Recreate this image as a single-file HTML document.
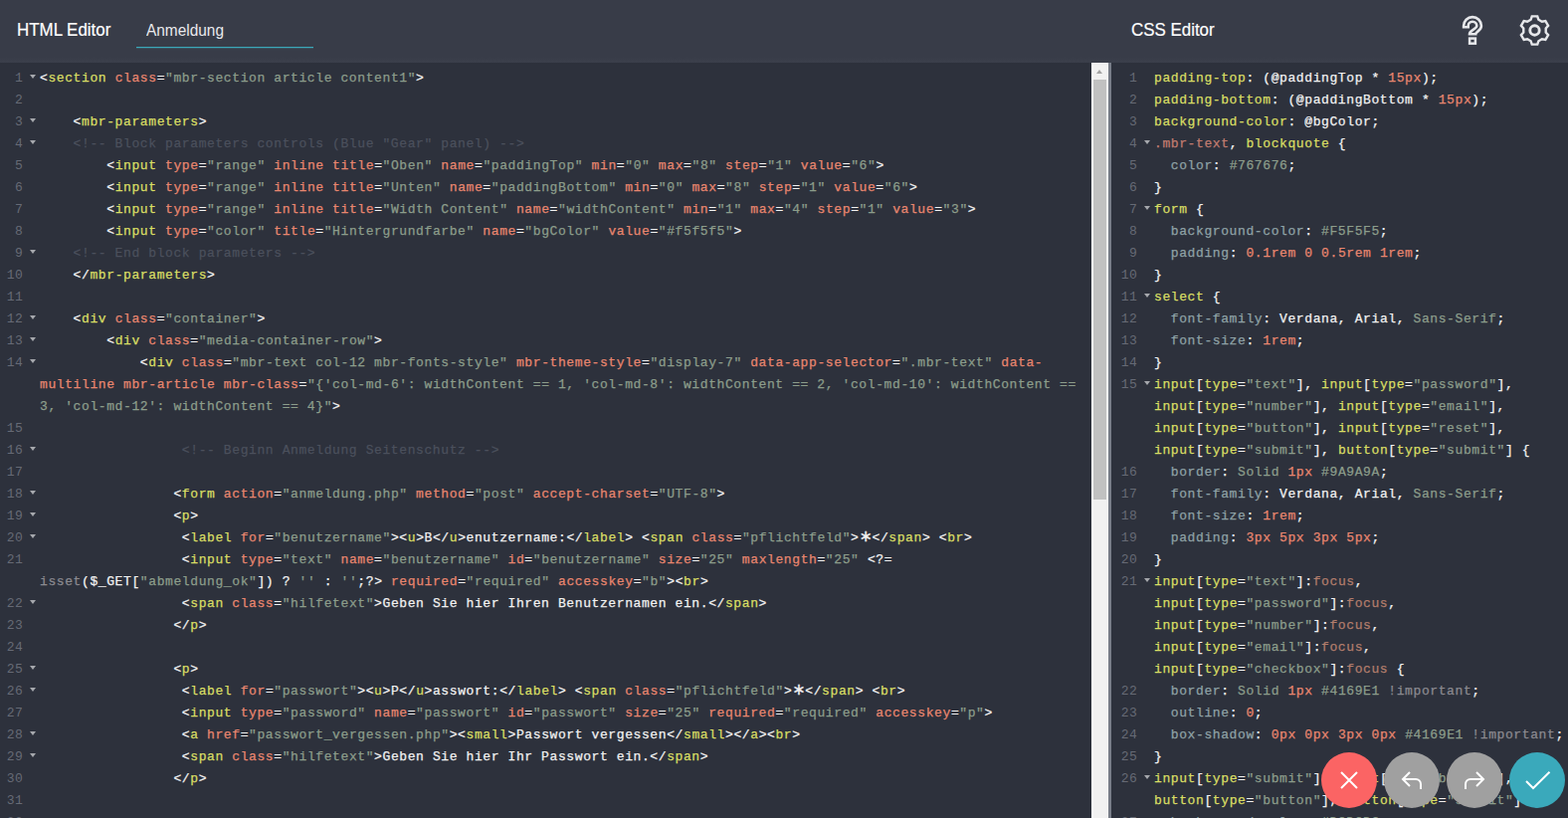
<!DOCTYPE html>
<html lang="de">
<head>
<meta charset="utf-8">
<title>Code Editor</title>
<style>
*{box-sizing:border-box;margin:0;padding:0}
html,body{width:1576px;height:822px;overflow:hidden;background:#2d313c}
body{position:relative;font-family:"Liberation Sans",sans-serif}
#hdr{position:absolute;left:0;top:0;width:1576px;height:63px;background:linear-gradient(#383c48 0,#383c48 57px,#3b3f4b 62px,#3a3e4a 63px);z-index:5}
#hdr .ttl{position:absolute;top:18px;height:24px;line-height:24px;font-size:19px;color:#fff;white-space:nowrap;transform-origin:0 50%;transform:scaleX(.89);-webkit-text-stroke:.2px}
#t1{left:17px}
#t2{left:1137px}
#nm{position:absolute;left:137px;top:14px;width:178px;height:34px;border-bottom:1px solid #3ba8b9;box-shadow:0 1px 0 rgba(59,168,185,.25);color:#e9e9ec;font-size:16px;line-height:33px;padding-left:10px;white-space:nowrap}
#nm span{display:inline-block;transform-origin:0 50%;transform:scaleX(.963)}
.ico{position:absolute;top:0;left:0}
.ed{position:absolute;top:63px;height:759px;background:#2d313c;overflow:hidden;font-family:"Liberation Mono",monospace;font-size:13px;letter-spacing:.6px;line-height:22px;font-weight:normal;-webkit-text-stroke:.25px}
#he{left:0;width:1097px}
#ce{left:1120px;width:456px}
.gut{position:absolute;left:0;top:5px;width:40px}
.gl{position:relative;height:22px;width:23.5px;text-align:right;color:#666a75;-webkit-text-stroke:0;white-space:pre}
.gl i{position:absolute;left:29.5px;top:7px;width:0;height:0;border-left:3px solid transparent;border-right:3px solid transparent;border-top:4.5px solid #a6a8ad}
.code{position:absolute;left:40px;top:5px;color:#f0f0f0}
.ln{height:22px;white-space:pre}
.p{color:#f2f2f2}
.x{color:#f2f2f2}
.t{color:#d9de64}
.a{color:#e8866f}
.s{color:#8c9d8b}
.c{color:#4b505c}
.k{color:#8b8a90}
.n{color:#e8866f}
.r{color:#8fa2a6}
.d{color:#c27c70}
.f{color:#b27d6c}
.ast{color:#f2f2f2;display:inline-block;width:13px;text-align:center;font:16px/10px "DejaVu Sans","Liberation Sans",sans-serif;letter-spacing:0;vertical-align:baseline;-webkit-text-stroke:.3px}
#sb{position:absolute;left:1097px;top:63px;width:17px;height:759px;background:#f1f1f1;border-left:2px solid #fff}
#sb b{position:absolute;left:0;top:17px;width:13px;height:422px;background:#c1c1c1}
#sb u{position:absolute;left:3px;top:7px;width:0;height:0;border-left:3.5px solid transparent;border-right:3.5px solid transparent;border-bottom:4px solid #a3a3a3}
#dv{position:absolute;left:1114px;top:63px;width:3px;height:759px;background:#787d88}
.fab{position:absolute;top:756px;width:56px;height:56px;border-radius:50%;z-index:6}
.fab svg{position:absolute;left:0;top:0}
</style>
</head>
<body>
<div id="hdr">
  <div class="ttl" id="t1">HTML Editor</div>
  <div id="nm"><span>Anmeldung</span></div>
  <div class="ttl" id="t2">CSS Editor</div>
  <svg class="ico" width="1576" height="62" viewBox="0 0 1576 62" fill="none" stroke="#e6e7ea" stroke-width="2.4">
    <path stroke-linejoin="miter" stroke-width="2.6" d="M1471.1 27.3 V26 A8.9 8.9 0 0 1 1488.9 26 C1488.9 31 1483.2 31.8 1483.2 34.3 H1477 C1477 29.8 1484.3 29.5 1484.3 26 A4.3 4.3 0 0 0 1475.7 26 V27.3 Z"/>
    <rect x="1477.1" y="38.6" width="5.8" height="5.1" stroke-width="2.5"/>
    <g transform="translate(1542.5 30.5)">
      <circle r="4.7" stroke-width="2.9"/>
      <path stroke-linejoin="miter" d="M3.90 -10.71 L2.75 -14.14 L-2.75 -14.14 L-3.90 -10.71 L-7.33 -8.73 L-10.87 -9.45 L-13.62 -4.69 L-11.23 -1.98 L-11.23 1.98 L-13.62 4.69 L-10.87 9.45 L-7.33 8.73 L-3.90 10.71 L-2.75 14.14 L2.75 14.14 L3.90 10.71 L7.33 8.73 L10.87 9.45 L13.62 4.69 L11.23 1.98 L11.23 -1.98 L13.62 -4.69 L10.87 -9.45 L7.33 -8.73Z"/>
    </g>
  </svg>
</div>
<div class="ed" id="he">
  <div class="gut">
<div class="gl">1<i></i></div>
<div class="gl">2</div>
<div class="gl">3<i></i></div>
<div class="gl">4<i></i></div>
<div class="gl">5</div>
<div class="gl">6</div>
<div class="gl">7</div>
<div class="gl">8</div>
<div class="gl">9<i></i></div>
<div class="gl">10</div>
<div class="gl">11</div>
<div class="gl">12<i></i></div>
<div class="gl">13<i></i></div>
<div class="gl">14<i></i></div>
<div class="gl"></div>
<div class="gl"></div>
<div class="gl">15</div>
<div class="gl">16<i></i></div>
<div class="gl">17</div>
<div class="gl">18<i></i></div>
<div class="gl">19<i></i></div>
<div class="gl">20<i></i></div>
<div class="gl">21</div>
<div class="gl"></div>
<div class="gl">22<i></i></div>
<div class="gl">23</div>
<div class="gl">24</div>
<div class="gl">25<i></i></div>
<div class="gl">26<i></i></div>
<div class="gl">27</div>
<div class="gl">28<i></i></div>
<div class="gl">29<i></i></div>
<div class="gl">30</div>
<div class="gl">31</div>
<div class="gl">32<i></i></div>
  </div>
  <div class="code">
<div class="ln"><span class="p">&lt;</span><span class="t">section</span> <span class="a">class</span><span class="p">=</span><span class="s">"mbr-section article content1"</span><span class="p">&gt;</span></div>
<div class="ln"></div>
<div class="ln">    <span class="p">&lt;</span><span class="t">mbr-parameters</span><span class="p">&gt;</span></div>
<div class="ln">    <span class="c">&lt;!-- Block parameters controls (Blue "Gear" panel) --&gt;</span></div>
<div class="ln">        <span class="p">&lt;</span><span class="t">input</span> <span class="a">type</span><span class="p">=</span><span class="s">"range"</span> <span class="a">inline</span> <span class="a">title</span><span class="p">=</span><span class="s">"Oben"</span> <span class="a">name</span><span class="p">=</span><span class="s">"paddingTop"</span> <span class="a">min</span><span class="p">=</span><span class="s">"0"</span> <span class="a">max</span><span class="p">=</span><span class="s">"8"</span> <span class="a">step</span><span class="p">=</span><span class="s">"1"</span> <span class="a">value</span><span class="p">=</span><span class="s">"6"</span><span class="p">&gt;</span></div>
<div class="ln">        <span class="p">&lt;</span><span class="t">input</span> <span class="a">type</span><span class="p">=</span><span class="s">"range"</span> <span class="a">inline</span> <span class="a">title</span><span class="p">=</span><span class="s">"Unten"</span> <span class="a">name</span><span class="p">=</span><span class="s">"paddingBottom"</span> <span class="a">min</span><span class="p">=</span><span class="s">"0"</span> <span class="a">max</span><span class="p">=</span><span class="s">"8"</span> <span class="a">step</span><span class="p">=</span><span class="s">"1"</span> <span class="a">value</span><span class="p">=</span><span class="s">"6"</span><span class="p">&gt;</span></div>
<div class="ln">        <span class="p">&lt;</span><span class="t">input</span> <span class="a">type</span><span class="p">=</span><span class="s">"range"</span> <span class="a">inline</span> <span class="a">title</span><span class="p">=</span><span class="s">"Width Content"</span> <span class="a">name</span><span class="p">=</span><span class="s">"widthContent"</span> <span class="a">min</span><span class="p">=</span><span class="s">"1"</span> <span class="a">max</span><span class="p">=</span><span class="s">"4"</span> <span class="a">step</span><span class="p">=</span><span class="s">"1"</span> <span class="a">value</span><span class="p">=</span><span class="s">"3"</span><span class="p">&gt;</span></div>
<div class="ln">        <span class="p">&lt;</span><span class="t">input</span> <span class="a">type</span><span class="p">=</span><span class="s">"color"</span> <span class="a">title</span><span class="p">=</span><span class="s">"Hintergrundfarbe"</span> <span class="a">name</span><span class="p">=</span><span class="s">"bgColor"</span> <span class="a">value</span><span class="p">=</span><span class="s">"#f5f5f5"</span><span class="p">&gt;</span></div>
<div class="ln">    <span class="c">&lt;!-- End block parameters --&gt;</span></div>
<div class="ln">    <span class="p">&lt;/</span><span class="t">mbr-parameters</span><span class="p">&gt;</span></div>
<div class="ln"></div>
<div class="ln">    <span class="p">&lt;</span><span class="t">div</span> <span class="a">class</span><span class="p">=</span><span class="s">"container"</span><span class="p">&gt;</span></div>
<div class="ln">        <span class="p">&lt;</span><span class="t">div</span> <span class="a">class</span><span class="p">=</span><span class="s">"media-container-row"</span><span class="p">&gt;</span></div>
<div class="ln">            <span class="p">&lt;</span><span class="t">div</span> <span class="a">class</span><span class="p">=</span><span class="s">"mbr-text col-12 mbr-fonts-style"</span> <span class="a">mbr-theme-style</span><span class="p">=</span><span class="s">"display-7"</span> <span class="a">data-app-selector</span><span class="p">=</span><span class="s">".mbr-text"</span> <span class="a">data-</span></div>
<div class="ln"><span class="a">multiline</span> <span class="a">mbr-article</span> <span class="a">mbr-class</span><span class="p">=</span><span class="s">"{'col-md-6': widthContent == 1, 'col-md-8': widthContent == 2, 'col-md-10': widthContent ==</span></div>
<div class="ln"><span class="s">3, 'col-md-12': widthContent == 4}"</span><span class="p">&gt;</span></div>
<div class="ln"></div>
<div class="ln">                 <span class="c">&lt;!-- Beginn Anmeldung Seitenschutz --&gt;</span></div>
<div class="ln"></div>
<div class="ln">                <span class="p">&lt;</span><span class="t">form</span> <span class="a">action</span><span class="p">=</span><span class="s">"anmeldung.php"</span> <span class="a">method</span><span class="p">=</span><span class="s">"post"</span> <span class="a">accept-charset</span><span class="p">=</span><span class="s">"UTF-8"</span><span class="p">&gt;</span></div>
<div class="ln">                <span class="p">&lt;</span><span class="t">p</span><span class="p">&gt;</span></div>
<div class="ln">                 <span class="p">&lt;</span><span class="t">label</span> <span class="a">for</span><span class="p">=</span><span class="s">"benutzername"</span><span class="p">&gt;</span><span class="p">&lt;</span><span class="t">u</span><span class="p">&gt;</span><span class="x">B</span><span class="p">&lt;/</span><span class="t">u</span><span class="p">&gt;</span><span class="x">enutzername:</span><span class="p">&lt;/</span><span class="t">label</span><span class="p">&gt;</span> <span class="p">&lt;</span><span class="t">span</span> <span class="a">class</span><span class="p">=</span><span class="s">"pflichtfeld"</span><span class="p">&gt;</span><span class="ast">∗</span><span class="p">&lt;/</span><span class="t">span</span><span class="p">&gt;</span> <span class="p">&lt;</span><span class="t">br</span><span class="p">&gt;</span></div>
<div class="ln">                 <span class="p">&lt;</span><span class="t">input</span> <span class="a">type</span><span class="p">=</span><span class="s">"text"</span> <span class="a">name</span><span class="p">=</span><span class="s">"benutzername"</span> <span class="a">id</span><span class="p">=</span><span class="s">"benutzername"</span> <span class="a">size</span><span class="p">=</span><span class="s">"25"</span> <span class="a">maxlength</span><span class="p">=</span><span class="s">"25"</span> <span class="p">&lt;?=</span></div>
<div class="ln"><span class="k">isset</span><span class="p">($_GET[</span><span class="s">"abmeldung_ok"</span><span class="p">])</span> <span class="p">?</span> <span class="s">''</span> <span class="p">:</span> <span class="s">''</span><span class="p">;?&gt;</span> <span class="a">required</span><span class="p">=</span><span class="s">"required"</span> <span class="a">accesskey</span><span class="p">=</span><span class="s">"b"</span><span class="p">&gt;</span><span class="p">&lt;</span><span class="t">br</span><span class="p">&gt;</span></div>
<div class="ln">                 <span class="p">&lt;</span><span class="t">span</span> <span class="a">class</span><span class="p">=</span><span class="s">"hilfetext"</span><span class="p">&gt;</span><span class="x">Geben Sie hier Ihren Benutzernamen ein.</span><span class="p">&lt;/</span><span class="t">span</span><span class="p">&gt;</span></div>
<div class="ln">                <span class="p">&lt;/</span><span class="t">p</span><span class="p">&gt;</span></div>
<div class="ln"></div>
<div class="ln">                <span class="p">&lt;</span><span class="t">p</span><span class="p">&gt;</span></div>
<div class="ln">                 <span class="p">&lt;</span><span class="t">label</span> <span class="a">for</span><span class="p">=</span><span class="s">"passwort"</span><span class="p">&gt;</span><span class="p">&lt;</span><span class="t">u</span><span class="p">&gt;</span><span class="x">P</span><span class="p">&lt;/</span><span class="t">u</span><span class="p">&gt;</span><span class="x">asswort:</span><span class="p">&lt;/</span><span class="t">label</span><span class="p">&gt;</span> <span class="p">&lt;</span><span class="t">span</span> <span class="a">class</span><span class="p">=</span><span class="s">"pflichtfeld"</span><span class="p">&gt;</span><span class="ast">∗</span><span class="p">&lt;/</span><span class="t">span</span><span class="p">&gt;</span> <span class="p">&lt;</span><span class="t">br</span><span class="p">&gt;</span></div>
<div class="ln">                 <span class="p">&lt;</span><span class="t">input</span> <span class="a">type</span><span class="p">=</span><span class="s">"password"</span> <span class="a">name</span><span class="p">=</span><span class="s">"passwort"</span> <span class="a">id</span><span class="p">=</span><span class="s">"passwort"</span> <span class="a">size</span><span class="p">=</span><span class="s">"25"</span> <span class="a">required</span><span class="p">=</span><span class="s">"required"</span> <span class="a">accesskey</span><span class="p">=</span><span class="s">"p"</span><span class="p">&gt;</span></div>
<div class="ln">                 <span class="p">&lt;</span><span class="t">a</span> <span class="a">href</span><span class="p">=</span><span class="s">"passwort_vergessen.php"</span><span class="p">&gt;</span><span class="p">&lt;</span><span class="t">small</span><span class="p">&gt;</span><span class="x">Passwort vergessen</span><span class="p">&lt;/</span><span class="t">small</span><span class="p">&gt;</span><span class="p">&lt;/</span><span class="t">a</span><span class="p">&gt;</span><span class="p">&lt;</span><span class="t">br</span><span class="p">&gt;</span></div>
<div class="ln">                 <span class="p">&lt;</span><span class="t">span</span> <span class="a">class</span><span class="p">=</span><span class="s">"hilfetext"</span><span class="p">&gt;</span><span class="x">Geben Sie hier Ihr Passwort ein.</span><span class="p">&lt;/</span><span class="t">span</span><span class="p">&gt;</span></div>
<div class="ln">                <span class="p">&lt;/</span><span class="t">p</span><span class="p">&gt;</span></div>
<div class="ln"></div>
<div class="ln">                <span class="p">&lt;</span><span class="t">p</span><span class="p">&gt;</span></div>
  </div>
</div>
<div id="sb"><u></u><b></b></div>
<div id="dv"></div>
<div class="ed" id="ce">
  <div class="gut">
<div class="gl">1</div>
<div class="gl">2</div>
<div class="gl">3</div>
<div class="gl">4<i></i></div>
<div class="gl">5</div>
<div class="gl">6</div>
<div class="gl">7<i></i></div>
<div class="gl">8</div>
<div class="gl">9</div>
<div class="gl">10</div>
<div class="gl">11<i></i></div>
<div class="gl">12</div>
<div class="gl">13</div>
<div class="gl">14</div>
<div class="gl">15<i></i></div>
<div class="gl"></div>
<div class="gl"></div>
<div class="gl"></div>
<div class="gl">16</div>
<div class="gl">17</div>
<div class="gl">18</div>
<div class="gl">19</div>
<div class="gl">20</div>
<div class="gl">21<i></i></div>
<div class="gl"></div>
<div class="gl"></div>
<div class="gl"></div>
<div class="gl"></div>
<div class="gl">22</div>
<div class="gl">23</div>
<div class="gl">24</div>
<div class="gl">25</div>
<div class="gl">26<i></i></div>
<div class="gl"></div>
<div class="gl">27</div>
  </div>
  <div class="code">
<div class="ln"><span class="t">padding-top</span><span class="p">:</span> <span class="p">(@paddingTop</span> <span class="p">*</span> <span class="n">15px</span><span class="p">);</span></div>
<div class="ln"><span class="t">padding-bottom</span><span class="p">:</span> <span class="p">(@paddingBottom</span> <span class="p">*</span> <span class="n">15px</span><span class="p">);</span></div>
<div class="ln"><span class="t">background-color</span><span class="p">:</span> <span class="p">@bgColor;</span></div>
<div class="ln"><span class="d">.mbr-text</span><span class="p">,</span> <span class="t">blockquote</span> <span class="p">{</span></div>
<div class="ln">  <span class="r">color</span><span class="p">:</span> <span class="s">#767676</span><span class="p">;</span></div>
<div class="ln"><span class="p">}</span></div>
<div class="ln"><span class="t">form</span> <span class="p">{</span></div>
<div class="ln">  <span class="r">background-color</span><span class="p">:</span> <span class="s">#F5F5F5</span><span class="p">;</span></div>
<div class="ln">  <span class="r">padding</span><span class="p">:</span> <span class="n">0.1rem</span> <span class="n">0</span> <span class="n">0.5rem</span> <span class="n">1rem</span><span class="p">;</span></div>
<div class="ln"><span class="p">}</span></div>
<div class="ln"><span class="t">select</span> <span class="p">{</span></div>
<div class="ln">  <span class="r">font-family</span><span class="p">:</span> <span class="p">Verdana,</span> <span class="p">Arial,</span> <span class="s">Sans-Serif</span><span class="p">;</span></div>
<div class="ln">  <span class="r">font-size</span><span class="p">:</span> <span class="n">1rem</span><span class="p">;</span></div>
<div class="ln"><span class="p">}</span></div>
<div class="ln"><span class="t">input</span><span class="p">[</span><span class="t">type</span><span class="p">=</span><span class="s">"text"</span><span class="p">]</span><span class="p">,</span> <span class="t">input</span><span class="p">[</span><span class="t">type</span><span class="p">=</span><span class="s">"password"</span><span class="p">]</span><span class="p">,</span></div>
<div class="ln"><span class="t">input</span><span class="p">[</span><span class="t">type</span><span class="p">=</span><span class="s">"number"</span><span class="p">]</span><span class="p">,</span> <span class="t">input</span><span class="p">[</span><span class="t">type</span><span class="p">=</span><span class="s">"email"</span><span class="p">]</span><span class="p">,</span></div>
<div class="ln"><span class="t">input</span><span class="p">[</span><span class="t">type</span><span class="p">=</span><span class="s">"button"</span><span class="p">]</span><span class="p">,</span> <span class="t">input</span><span class="p">[</span><span class="t">type</span><span class="p">=</span><span class="s">"reset"</span><span class="p">]</span><span class="p">,</span></div>
<div class="ln"><span class="t">input</span><span class="p">[</span><span class="t">type</span><span class="p">=</span><span class="s">"submit"</span><span class="p">]</span><span class="p">,</span> <span class="t">button</span><span class="p">[</span><span class="t">type</span><span class="p">=</span><span class="s">"submit"</span><span class="p">]</span> <span class="p">{</span></div>
<div class="ln">  <span class="r">border</span><span class="p">:</span> <span class="s">Solid</span> <span class="n">1px</span> <span class="s">#9A9A9A</span><span class="p">;</span></div>
<div class="ln">  <span class="r">font-family</span><span class="p">:</span> <span class="p">Verdana,</span> <span class="p">Arial,</span> <span class="s">Sans-Serif</span><span class="p">;</span></div>
<div class="ln">  <span class="r">font-size</span><span class="p">:</span> <span class="n">1rem</span><span class="p">;</span></div>
<div class="ln">  <span class="r">padding</span><span class="p">:</span> <span class="n">3px</span> <span class="n">5px</span> <span class="n">3px</span> <span class="n">5px</span><span class="p">;</span></div>
<div class="ln"><span class="p">}</span></div>
<div class="ln"><span class="t">input</span><span class="p">[</span><span class="t">type</span><span class="p">=</span><span class="s">"text"</span><span class="p">]</span><span class="p">:</span><span class="f">focus</span><span class="p">,</span></div>
<div class="ln"><span class="t">input</span><span class="p">[</span><span class="t">type</span><span class="p">=</span><span class="s">"password"</span><span class="p">]</span><span class="p">:</span><span class="f">focus</span><span class="p">,</span></div>
<div class="ln"><span class="t">input</span><span class="p">[</span><span class="t">type</span><span class="p">=</span><span class="s">"number"</span><span class="p">]</span><span class="p">:</span><span class="f">focus</span><span class="p">,</span></div>
<div class="ln"><span class="t">input</span><span class="p">[</span><span class="t">type</span><span class="p">=</span><span class="s">"email"</span><span class="p">]</span><span class="p">:</span><span class="f">focus</span><span class="p">,</span></div>
<div class="ln"><span class="t">input</span><span class="p">[</span><span class="t">type</span><span class="p">=</span><span class="s">"checkbox"</span><span class="p">]</span><span class="p">:</span><span class="f">focus</span> <span class="p">{</span></div>
<div class="ln">  <span class="r">border</span><span class="p">:</span> <span class="s">Solid</span> <span class="n">1px</span> <span class="s">#4169E1</span> <span class="k">!important</span><span class="p">;</span></div>
<div class="ln">  <span class="r">outline</span><span class="p">:</span> <span class="n">0</span><span class="p">;</span></div>
<div class="ln">  <span class="r">box-shadow</span><span class="p">:</span> <span class="n">0px</span> <span class="n">0px</span> <span class="n">3px</span> <span class="n">0px</span> <span class="s">#4169E1</span> <span class="k">!important</span><span class="p">;</span></div>
<div class="ln"><span class="p">}</span></div>
<div class="ln"><span class="t">input</span><span class="p">[</span><span class="t">type</span><span class="p">=</span><span class="s">"submit"</span><span class="p">]</span><span class="p">,</span> <span class="t">input</span><span class="p">[</span><span class="t">type</span><span class="p">=</span><span class="s">"button"</span><span class="p">]</span><span class="p">,</span></div>
<div class="ln"><span class="t">button</span><span class="p">[</span><span class="t">type</span><span class="p">=</span><span class="s">"button"</span><span class="p">]</span><span class="p">,</span> <span class="t">button</span><span class="p">[</span><span class="t">type</span><span class="p">=</span><span class="s">"submit"</span><span class="p">]</span> <span class="p">{</span></div>
<div class="ln">  <span class="r">background-color</span><span class="p">:</span> <span class="s">#DCDCDC</span><span class="p">;</span></div>
  </div>
</div>
<div class="fab" style="left:1328px;background:#fb6464">
  <svg width="56" height="56" viewBox="0 0 56 56" fill="none" stroke="#fff" stroke-width="2"><path d="M20 20 L36 36 M36 20 L20 36"/></svg>
</div>
<div class="fab" style="left:1391px;background:#a0a0a0">
  <svg width="56" height="56" viewBox="0 0 56 56" fill="none" stroke="#fff" stroke-width="2"><path d="M26 20 L19 27 L26 34 M19 27 H32 a5 5 0 0 1 5 5 V37"/></svg>
</div>
<div class="fab" style="left:1454px;background:#a0a0a0">
  <svg width="56" height="56" viewBox="0 0 56 56" fill="none" stroke="#fff" stroke-width="2"><path d="M30 20 L37 27 L30 34 M37 27 H24 a5 5 0 0 0 -5 5 V37"/></svg>
</div>
<div class="fab" style="left:1517px;background:#3aa9bb">
  <svg width="56" height="56" viewBox="0 0 56 56" fill="none" stroke="#fff" stroke-width="2"><path d="M17 29 L24 36 L40.5 19.8"/></svg>
</div>
</body>
</html>
